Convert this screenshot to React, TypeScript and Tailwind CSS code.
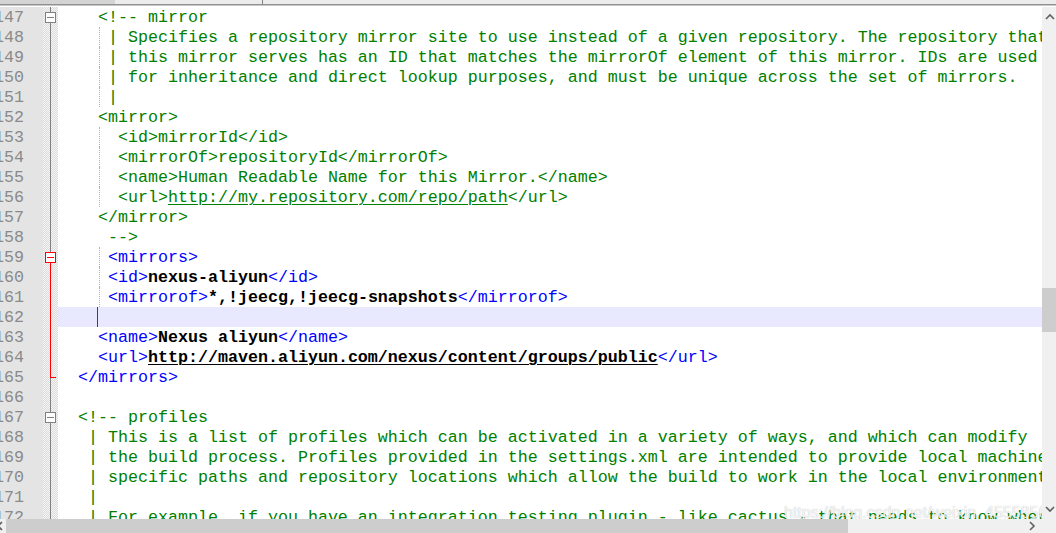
import React from "react";

type Seg = { t: string; k: "g" | "b" | "x" | "t" | "gu" | "xu" };
const g = (t: string): Seg => ({ t, k: "g" });
const gu = (t: string): Seg => ({ t, k: "gu" });
const b = (t: string): Seg => ({ t, k: "b" });
const x = (t: string): Seg => ({ t, k: "x" });
const xu = (t: string): Seg => ({ t, k: "xu" });
const s = (t: string): Seg => ({ t, k: "t" });

type Fold = "none" | "boxGray" | "boxRed" | "red" | "redEnd";
type Line = { n: number; segs: Seg[]; fold?: Fold; guide?: boolean; current?: boolean };

const lines: Line[] = [
  { n: 147, segs: [g("    <!-- mirror")], fold: "boxGray" },
  { n: 148, segs: [g("     | Specifies a repository mirror site to use instead of a given repository. The repository that")], guide: true },
  { n: 149, segs: [g("     | this mirror serves has an ID that matches the mirrorOf element of this mirror. IDs are used")], guide: true },
  { n: 150, segs: [g("     | for inheritance and direct lookup purposes, and must be unique across the set of mirrors.")], guide: true },
  { n: 151, segs: [g("     |")], guide: true },
  { n: 152, segs: [g("    <mirror>")] },
  { n: 153, segs: [g("      <id>mirrorId</id>")], guide: true },
  { n: 154, segs: [g("      <mirrorOf>repositoryId</mirrorOf>")], guide: true },
  { n: 155, segs: [g("      <name>Human Readable Name for this Mirror.</name>")], guide: true },
  { n: 156, segs: [g("      <url>"), gu("http://my.repository.com/repo/path"), g("</url>")], guide: true },
  { n: 157, segs: [g("    </mirror>")] },
  { n: 158, segs: [g("     -->")] },
  { n: 159, segs: [s("     "), b("<mirrors>")], fold: "boxRed", guide: true },
  { n: 160, segs: [s("     "), b("<id>"), x("nexus-aliyun"), b("</id>")], fold: "red", guide: true },
  { n: 161, segs: [s("     "), b("<mirrorof>"), x("*,!jeecg,!jeecg-snapshots"), b("</mirrorof>")], fold: "red", guide: true },
  { n: 162, segs: [s("")], fold: "red", current: true },
  { n: 163, segs: [s("    "), b("<name>"), x("Nexus aliyun"), b("</name>")], fold: "red" },
  { n: 164, segs: [s("    "), b("<url>"), xu("http://maven.aliyun.com/nexus/content/groups/public"), b("</url>")], fold: "red" },
  { n: 165, segs: [s("  "), b("</mirrors>")], fold: "redEnd" },
  { n: 166, segs: [s("")] },
  { n: 167, segs: [g("  <!-- profiles")], fold: "boxGray" },
  { n: 168, segs: [g("   | This is a list of profiles which can be activated in a variety of ways, and which can modify")] },
  { n: 169, segs: [g("   | the build process. Profiles provided in the settings.xml are intended to provide local machine")] },
  { n: 170, segs: [g("   | specific paths and repository locations which allow the build to work in the local environment.")] },
  { n: 171, segs: [g("   |")] },
  { n: 172, segs: [g("   | For example, if you have an integration testing plugin - like cactus - that needs to know where")] },
];

function SegView({ seg }: { seg: Seg }) {
  switch (seg.k) {
    case "g":
      return <span className="text-[#008000]">{seg.t}</span>;
    case "gu":
      return <span className="text-[#008000] underline decoration-1 underline-offset-[2px]">{seg.t}</span>;
    case "b":
      return <span className="text-[#0000ff]">{seg.t}</span>;
    case "x":
      return <span className="text-black font-bold">{seg.t}</span>;
    case "xu":
      return <span className="text-black font-bold underline decoration-1 underline-offset-[2px]">{seg.t}</span>;
    default:
      return <span>{seg.t}</span>;
  }
}

function FoldBox({ red }: { red: boolean }) {
  return (
    <div
      className={
        "absolute left-[2px] top-[5px] w-[11px] h-[11px] border flex items-center justify-center " +
        (red ? "border-[#ff0000] bg-white" : "border-[#808080] bg-white")
      }
    >
      <div className={"w-[7px] h-px " + (red ? "bg-[#ff0000]" : "bg-[#808080]")} />
    </div>
  );
}

function FoldCell({ fold }: { fold: Fold }) {
  return (
    <div className="relative w-[15px] h-full shrink-0 bg-[repeating-conic-gradient(#dcdcdc_0_25%,#f4f4f4_0_50%)] bg-[length:2px_2px]">
      {fold === "red" && <div className="absolute left-[7px] top-0 bottom-0 w-px bg-[#ff0000]" />}
      {fold === "redEnd" && (
        <>
          <div className="absolute left-[7px] top-0 h-[10px] w-px bg-[#ff0000]" />
          <div className="absolute left-[7px] top-[10px] bottom-0 w-px bg-[#808080]" />
          <div className="absolute left-[7px] top-[10px] h-px w-[6px] bg-[#ff0000]" />
        </>
      )}
      {fold === "boxRed" && (
        <>
          <div className="absolute left-[7px] top-0 h-[5px] w-px bg-[#808080]" />
          <div className="absolute left-[7px] top-[16px] bottom-0 w-px bg-[#ff0000]" />
          <FoldBox red />
        </>
      )}
      {fold === "boxGray" && (
        <>
          <div className="absolute left-[7px] top-0 bottom-0 w-px bg-[#808080]" />
          <FoldBox red={false} />
        </>
      )}
      {fold === "none" && <div className="absolute left-[7px] top-0 bottom-0 w-px bg-[#808080]" />}
    </div>
  );
}

function Row({ line }: { line: Line }) {
  return (
    <div className="flex h-[20px] shrink-0 leading-[20px] overflow-hidden">
      <div className="w-[43px] h-full shrink-0 overflow-hidden bg-[#e4e4e4] text-[#8a8a8a] flex justify-end pr-[19px] pt-px whitespace-pre">
        {String(line.n)}
      </div>
      <FoldCell fold={line.fold ?? "none"} />
      <div className={"relative flex-1 h-full pt-px whitespace-pre overflow-hidden " + (line.current ? "bg-[#e8e8ff]" : "bg-white")}>
        {line.guide && (
          <div className="absolute left-[41px] top-0 bottom-0 border-l border-dotted border-[#b0b0b0]" />
        )}
        {line.current && <div className="absolute left-[39px] top-0 bottom-0 w-px bg-[#8000ff]" />}
        {line.segs.map((seg, i) => (
          <SegView key={i} seg={seg} />
        ))}
      </div>
    </div>
  );
}

function Chevron({ dir }: { dir: "up" | "down" | "left" | "right" }) {
  const d =
    dir === "up"
      ? "M1 6 L5 2 L9 6"
      : dir === "down"
      ? "M1 2 L5 6 L9 2"
      : dir === "left"
      ? "M6 1 L2 5 L6 9"
      : "M2 1 L6 5 L2 9";
  const w = dir === "up" || dir === "down" ? 10 : 8;
  const h = dir === "up" || dir === "down" ? 8 : 10;
  return (
    <svg width={w} height={h} viewBox={`0 0 ${w} ${h}`}>
      <path d={d} fill="none" stroke="#606060" strokeWidth="1.6" />
    </svg>
  );
}

export default function App() {
  return (
    <div
      className="w-[1056px] h-[533px] overflow-hidden bg-white flex flex-col text-[16.66px]"
      style={{ fontFamily: '"Liberation Mono", "Courier New", monospace' }}
    >
      {/* top strip */}
      <div className="h-[4px] flex shrink-0">
        <div className="w-[115px] bg-[#d4d4d4]" />
        <div className="w-[147px] bg-[#ececec]" />
        <div className="w-px bg-[#808080]" />
        <div className="flex-1 bg-[#ececec]" />
      </div>
      <div className="h-px bg-[#909090] shrink-0" />
      <div className="h-px bg-[#c8c8c8] shrink-0" />
      <div className="h-px bg-white shrink-0" />

      <div className="flex flex-1 min-h-0">
        <div className="relative flex-1 flex flex-col overflow-hidden">
          {lines.map((l) => (
            <Row key={l.n} line={l} />
          ))}
          <div
            className="absolute left-[784px] top-[494px] text-[16px] text-white/85 whitespace-nowrap [text-shadow:0_0_1px_rgba(120,120,120,0.6)]"
            style={{ fontFamily: '"Liberation Sans", Arial, sans-serif' }}
          >
            https://blog.csdn.net/weixin_45558565
          </div>
        </div>
        {/* vertical scrollbar */}
        <div className="w-[14px] shrink-0 bg-[#f0f0f0] flex flex-col items-center">
          <div className="h-[20px] flex items-center justify-center pl-[2px]">
            <Chevron dir="up" />
          </div>
          <div className="h-[261px]" />
          <div className="h-[44px] w-full bg-[#cdcdcd]" />
          <div className="flex-1" />
          <div className="h-[20px] flex items-center justify-center pl-[2px]">
            <Chevron dir="down" />
          </div>
        </div>
      </div>

      {/* horizontal scrollbar */}
      <div className="h-[14px] shrink-0 flex bg-[#f0f0f0]">
        <div className="w-[10px] flex items-center justify-start -ml-[4px]">
          <Chevron dir="left" />
        </div>
        <div className="w-[842px] bg-[#cdcdcd]" />
        <div className="flex-1" />
        <div className="w-[20px] flex items-center justify-center">
          <Chevron dir="right" />
        </div>
        <div className="w-[14px] bg-[#f0f0f0]" />
      </div>
    </div>
  );
}
